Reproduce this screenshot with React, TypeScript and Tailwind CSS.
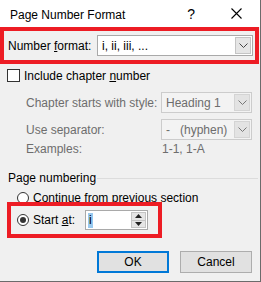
import React from "react";

const FONT = { fontFamily: '"Liberation Sans", Arial, sans-serif' };

const Chevron = ({ color = "#444" }: { color?: string }) => (
  <svg width="9" height="5" viewBox="0 0 9 5">
    <path d="M0.5 0.5 L4.5 4.5 L8.5 0.5" fill="none" stroke={color} strokeWidth="1" />
  </svg>
);

// Combo box with the little drop button on the right
const Combo = ({
  value,
  disabled = false,
  className = "",
}: {
  value: string;
  disabled?: boolean;
  className?: string;
}) => (
  <div
    className={`flex h-[21px] items-stretch border ${
      disabled ? "border-[#cccccc] bg-[#f3f3f3] text-[#6d6d6d]" : "border-[#a9a9a9] bg-white text-black"
    } ${className}`}
  >
    <div className="flex flex-1 items-center whitespace-pre pl-[4px] leading-none">{value}</div>
    <div
      className={`m-px flex w-[16px] items-center justify-center border ${
        disabled ? "border-[#d4d4d4] bg-[#e3e3e3]" : "border-[#c4c4c4] bg-[#e5e5e5]"
      }`}
    >
      <Chevron color={disabled ? "#777" : "#444"} />
    </div>
  </div>
);

const Radio = ({ checked = false }: { checked?: boolean }) => (
  <div className="flex h-[12px] w-[12px] items-center justify-center rounded-full border border-[#333] bg-white">
    {checked && <div className="h-[6px] w-[6px] rounded-full bg-[#333]" />}
  </div>
);

export default function App() {
  return (
    <div
      className="flex h-[282px] w-[261px] flex-col border-r border-b border-[#6b6b6b] bg-[#f0f0f0] text-[12px] text-black"
      style={FONT}
    >
      {/* Title bar */}
      <div className="flex h-[27px] items-center bg-white pl-[10px]">
        <span className="pt-[2px]">Page Number Format</span>
        <span className="ml-auto mr-[36px] pt-[1px] text-[14px]">?</span>
        <svg className="mr-[18px]" width="11" height="11" viewBox="0 0 11 11">
          <path d="M0.5 0.5 L10.5 10.5 M10.5 0.5 L0.5 10.5" stroke="#000" strokeWidth="1.1" />
        </svg>
      </div>

      {/* Number format */}
      <div className="flex h-[37px] w-[259px] items-center border-4 border-[#ed1c24] pl-[4px]">
        <span>
          Number <span className="underline">f</span>ormat:
        </span>
        <Combo value="i, ii, iii, ..." className="ml-auto mr-[2px] w-[156px]" />
      </div>

      {/* Include chapter number */}
      <div className="mt-[5px] flex h-[13px] items-center pl-[7px]">
        <div className="h-[13px] w-[13px] border border-[#333] bg-white" />
        <span className="ml-[4px]">
          Include chapter <span className="underline">n</span>umber
        </span>
      </div>

      <div className="mt-[10px] flex flex-col gap-[6px] pl-[26px] text-[#6d6d6d]">
        <div className="flex items-center">
          <span className="w-[135px]">Chapter starts with style:</span>
          <Combo value="Heading 1" disabled className="w-[91px]" />
        </div>
        <div className="flex items-center">
          <span className="w-[135px]">Use separator:</span>
          <Combo value="-   (hyphen)" disabled className="w-[91px]" />
        </div>
      </div>
      <div className="flex h-[18px] items-center pl-[26px] text-[#6d6d6d]">
        <span className="w-[136px]">Examples:</span>
        <span>1-1, 1-A</span>
      </div>

      {/* Page numbering group */}
      <div className="mt-[12px] flex h-[16px] items-center pl-[8px] pr-[2px]">
        <span className="w-[89px]">Page numbering</span>
        <div className="h-px flex-1 bg-[#dcdcdc]" />
      </div>
      <div className="mt-[4px] flex h-[16px] items-center pl-[17px]">
        <Radio />
        <span className="ml-[4px]">Continue from previous section</span>
      </div>

      <div className="-mt-[4px] ml-[7px] flex h-[36px] w-[155px] items-center border-4 border-[#ed1c24] pl-[6px]">
        <Radio checked />
        <span className="ml-[4px] w-[52px]">
          Start <span className="underline">a</span>t:
        </span>
        <div className="flex h-[20px] w-[63px] items-stretch border border-[#a9a9a9] bg-white">
          <div className="flex flex-1 items-center pl-[2px]">
            <span className="bg-[#99c9ef] px-px leading-[15px]">i</span>
          </div>
          <div className="m-px flex w-[15px] flex-col border border-[#c4c4c4] bg-[#e5e5e5]">
            <div className="flex flex-1 items-center justify-center border-b border-[#c4c4c4]">
              <svg width="7" height="4" viewBox="0 0 7 4">
                <path d="M0 4 L3.5 0 L7 4 Z" fill="#222" />
              </svg>
            </div>
            <div className="flex flex-1 items-center justify-center">
              <svg width="7" height="4" viewBox="0 0 7 4">
                <path d="M0 0 L3.5 4 L7 0 Z" fill="#222" />
              </svg>
            </div>
          </div>
        </div>
      </div>

      {/* Buttons */}
      <div className="mt-[13px] flex justify-end gap-[11px] pr-[8px]">
        <button className="h-[22px] w-[72px] border-2 border-[#0078d7] bg-[#e1e1e1]">OK</button>
        <button className="h-[22px] w-[72px] border border-[#adadad] bg-[#e1e1e1]">Cancel</button>
      </div>
    </div>
  );
}
